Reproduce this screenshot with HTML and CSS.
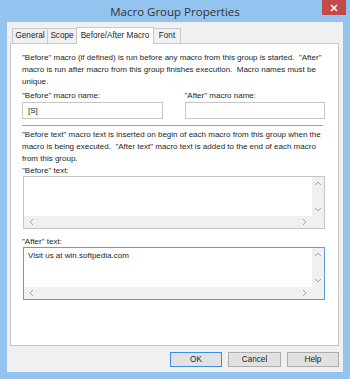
FILE: index.html
```html
<!DOCTYPE html>
<html lang="en">
<head>
    <meta charset="UTF-8">
    <title>Macro Group Properties</title>
    <link rel="stylesheet" href="styles.css">
</head>
<body>
    <div class="window">
        <div class="titlebar">
            <span></span>
            <span class="title">Macro Group Properties</span>
            <div class="close">
                <svg width="8" height="8" viewBox="0 0 8 8"><path d="M1 1L7 7M7 1L1 7" stroke="#fff" stroke-width="1.6"/></svg>
            </div>
        </div>
        <div class="client">
            <!-- Tabs -->
            <div class="tabs">
                <div class="tab tab-general">General</div>
                <div class="tab tab-scope">Scope</div>
                <div class="tab tab-macro active">Before/After Macro</div>
                <div class="tab tab-font">Font</div>
            </div>

            <div class="panel">
                <p class="note">"Before" macro (if defined) is run before any macro from this group is started.&nbsp; "After" macro is run after macro from this group finishes execution.&nbsp; Macro names must be unique.</p>
                <div class="names">
                    <div class="field">
                        <label>"Before" macro name:</label>
                        <div class="input">[S]</div>
                    </div>
                    <div class="field">
                        <label>"After" macro name:</label>
                        <div class="input"></div>
                    </div>
                </div>
                <div class="sep"></div>
                <p class="note">"Before text" macro text is inserted on begin of each macro from this group when the macro is being executed.&nbsp; "After text" macro text is added to the end of each macro from this group.</p>

                <label class="memo-label">"Before" text:</label>
                <div class="memo">
                    <div class="memo-text"></div>
                    <div class="vscroll">
                        <svg width="8" height="5" viewBox="0 0 8 5"><path d="M1 4L4 1L7 4" fill="none" stroke="#a6a6a6"/></svg>
                        <svg width="8" height="5" viewBox="0 0 8 5"><path d="M1 1L4 4L7 1" fill="none" stroke="#a6a6a6"/></svg>
                    </div>
                    <div class="hscroll">
                        <svg width="5" height="8" viewBox="0 0 5 8"><path d="M4 1L1 4L4 7" fill="none" stroke="#a6a6a6"/></svg>
                        <svg width="5" height="8" viewBox="0 0 5 8"><path d="M1 1L4 4L1 7" fill="none" stroke="#a6a6a6"/></svg>
                    </div>
                    <div class="corner"></div>
                </div>

                <label class="memo-label">"After" text:</label>
                <div class="memo focus">
                    <div class="memo-text">Visit us at win.softpedia.com</div>
                    <div class="vscroll">
                        <svg width="8" height="5" viewBox="0 0 8 5"><path d="M1 4L4 1L7 4" fill="none" stroke="#a6a6a6"/></svg>
                        <svg width="8" height="5" viewBox="0 0 8 5"><path d="M1 1L4 4L7 1" fill="none" stroke="#a6a6a6"/></svg>
                    </div>
                    <div class="hscroll">
                        <svg width="5" height="8" viewBox="0 0 5 8"><path d="M4 1L1 4L4 7" fill="none" stroke="#a6a6a6"/></svg>
                        <svg width="5" height="8" viewBox="0 0 5 8"><path d="M1 1L4 4L1 7" fill="none" stroke="#a6a6a6"/></svg>
                    </div>
                    <div class="corner"></div>
                </div>
            </div>

            <div class="buttons">
                <div class="btn default">OK</div>
                <div class="btn cancel">Cancel</div>
                <div class="btn">Help</div>
            </div>
        </div>
    </div>
</body>
</html>
```

FILE: styles.css
```css
* {
    margin: 0;
    padding: 0;
    box-sizing: border-box;
    font-family: "Liberation Sans", Arial, sans-serif;
}
body {
    width: 350px;
    height: 379px;
    overflow: hidden;
}
.window {
    width: 350px;
    height: 379px;
    background: #93c3ef;
    padding: 0 7px 7px 7px;
}
.titlebar {
    height: 22px;
    margin: 0 -7px;
    display: grid;
    grid-template-columns: 1fr auto 1fr;
}
.title {
    font-family: "Open Sans", sans-serif;
    font-size: 11.5px;
    color: #333;
    line-height: 23px;
}
.close {
    justify-self: end;
    width: 24px;
    height: 15px;
    margin-right: 4px;
    background: #c4494a;
    display: flex;
    justify-content: center;
    align-items: center;
}
.client {
    height: 350px;
    background: #f0f0f0;
    display: flex;
    flex-direction: column;
}
.tabs {
    display: flex;
    align-items: flex-end;
    height: 21px;
    padding-left: 5px;
}
.tab {
    height: 15px;
    border: 1px solid #c8c8c8;
    border-bottom: none;
    background: #f0f0f0;
    font-size: 8.2px;
    color: #1e1e1e;
    text-align: center;
    line-height: 14px;
    margin-right: -1px;
}
.tab-general { width: 36px; }
.tab-scope { width: 30px; }
.tab-macro { width: 78px; }
.tab-font { width: 28px; }
.tab.active {
    height: 17px;
    background: #fff;
    border-color: #c8c8c8;
    position: relative;
    top: 1px;
    z-index: 1;
    line-height: 16px;
}
.panel {
    margin: 0 4px 0 3px;
    height: 303px;
    background: #fff;
    border: 1px solid #c8c8c8;
    padding: 8px 13px 0 11px;
    font-size: 8px;
    color: #1e1e1e;
}
.note {
    line-height: 12px;
}
.names {
    display: flex;
    gap: 22px;
    margin-top: 2px;
}
.field {
    flex: 1;
}
.field label {
    display: block;
    line-height: 12px;
}
.input {
    height: 17px;
    border: 1px solid #c6c6c6;
    padding-left: 5px;
    line-height: 15px;
    font-size: 8px;
}
.sep {
    height: 1px;
    background: #a0a0a0;
    margin: 6px 2px 3px 0;
}
.memo-label {
    display: block;
    line-height: 11px;
}
.memo {
    height: 53px;
    border: 1px solid #c6c6c6;
    display: grid;
    grid-template-columns: 1fr 12px;
    grid-template-rows: 1fr 12px;
    margin-bottom: 7px;
    margin-left: 1px;
}
.memo.focus {
    border-color: #5a9fe3;
}
.memo-text {
    padding: 2px 4px;
    line-height: 12px;
}
.vscroll {
    background: #f0f0f0;
    display: flex;
    flex-direction: column;
    justify-content: space-between;
    align-items: center;
    padding: 4px 0;
}
.hscroll {
    background: #f0f0f0;
    display: flex;
    justify-content: space-between;
    align-items: center;
    padding: 0 5px;
}
.corner {
    background: #f0f0f0;
}
.buttons {
    display: flex;
    justify-content: flex-end;
    gap: 6px;
    margin: 6px 4px 0 0;
}
.btn {
    width: 52px;
    height: 15px;
    background: #e1e1e1;
    border: 1px solid #adadad;
    font-size: 8.2px;
    color: #1e1e1e;
    text-align: center;
    line-height: 13px;
}
.btn.cancel {
    width: 53px;
}
.btn.default {
    border-color: #3c8fe0;
}
```
